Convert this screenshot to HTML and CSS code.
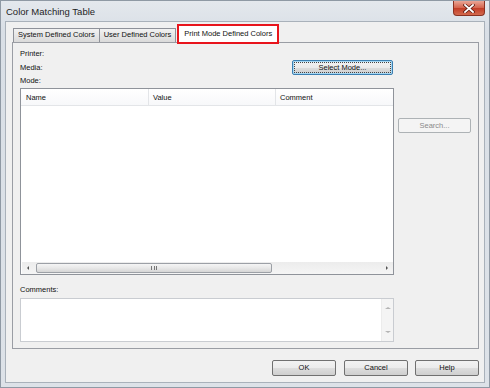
FILE: index.html
```html
<!DOCTYPE html>
<html lang="en">
<head>
  <meta charset="UTF-8" />
  <title>Color Matching Table</title>
  <link rel="stylesheet" href="styles.css">
</head>
<body>
  <div class="window">
    <div class="titlebar">
      <span class="title">Color Matching Table</span>
      <div class="close">
        <svg width="12" height="9" viewBox="0 0 12 9">
          <path d="M2 1 L10 8 M10 1 L2 8" stroke="#5a1a10" stroke-width="3.2" stroke-linecap="square"/>
          <path d="M2 1 L10 8 M10 1 L2 8" stroke="#fff" stroke-width="1.8" stroke-linecap="square"/>
        </svg>
      </div>
    </div>

    <div class="client">
      <div class="tabs">
        <div class="tab">System Defined Colors</div>
        <div class="tab">User Defined Colors</div>
        <div class="tab active">Print Mode Defined Colors</div>
      </div>

      <div class="panel">
        <div class="main">
          <div class="info">
            <div class="labels">
              <div>Printer:</div>
              <div>Media:</div>
              <div>Mode:</div>
            </div>
            <button class="btn default">Select Mode...</button>
          </div>

          <div class="list">
            <div class="list-head">
              <div class="col col-name">Name</div>
              <div class="col col-value">Value</div>
              <div class="col col-comment">Comment</div>
            </div>
            <div class="list-body"></div>
            <div class="hscroll">
              <span class="arrow left"></span>
              <div class="track">
                <div class="thumb"><span class="grip"></span></div>
              </div>
              <span class="arrow right"></span>
            </div>
          </div>

          <div class="field-label">Comments:</div>
          <div class="comments">
            <div class="vscroll">
              <span class="arrow up"></span>
              <span class="arrow down"></span>
            </div>
          </div>
        </div>

        <div class="side">
          <button class="btn disabled">Search...</button>
        </div>
      </div>

      <div class="actions">
        <button class="btn">OK</button>
        <button class="btn">Cancel</button>
        <button class="btn">Help</button>
      </div>
    </div>
  </div>
</body>
</html>
```

FILE: styles.css
```css
* {
  box-sizing: border-box;
}

body {
  margin: 0;
  font-family: 'Liberation Sans', Arial, sans-serif;
  font-size: 7.5px;
  color: #111;
  background: #fff;
}

.window {
  width: 490px;
  height: 388px;
  border: 1px solid #8f99a4;
  background: linear-gradient(#e4e8ed, #d9dfe6 30px, #dde2e8);
  display: flex;
  flex-direction: column;
}

.titlebar {
  height: 20px;
  display: flex;
  align-items: flex-start;
  justify-content: space-between;
  padding-left: 5px;
}

.title {
  font-size: 9.5px;
  color: #1e1e1e;
  margin-top: 5px;
}

.close {
  width: 32px;
  height: 15px;
  margin-right: 4px;
  border: 1px solid #8a3222;
  border-top: none;
  border-radius: 0 0 4px 4px;
  background: linear-gradient(#eaa696, #d4624b 50%, #c23c26 51%, #d36a4e);
  display: flex;
  align-items: center;
  justify-content: center;
}

.client {
  flex: 1;
  margin: 0 4px 4px 4px;
  border: 1px solid #a9b1ba;
  background: #f0f0f0;
  padding: 2px 5px 0 6px;
  display: flex;
  flex-direction: column;
}

/* tabs */
.tabs {
  height: 18px;
  display: flex;
  align-items: flex-end;
  padding-left: 1px;
  position: relative;
  z-index: 1;
}

.tab {
  height: 14px;
  line-height: 12px;
  padding: 0 4px;
  border: 1px solid #8e9199;
  border-bottom: none;
  margin-right: -1px;
  background: linear-gradient(#f2f2f2, #e6e6e6 50%, #dadada);
  white-space: nowrap;
}

.tab.active {
  height: 20px;
  line-height: 15px;
  margin: 0 0 -2px 2px;
  padding: 0 5px;
  border: 2px solid #e8141c;
  background: #fff;
}

/* panel */
.panel {
  height: 307px;
  border: 1px solid #9a9da4;
  background: #f0f0f0;
  padding: 4px 0 0 7px;
  display: flex;
}

.main {
  width: 374px;
  display: flex;
  flex-direction: column;
}

.info {
  display: flex;
  justify-content: space-between;
}

.labels div {
  height: 13.5px;
  line-height: 13.5px;
}

.side {
  padding: 71px 0 0 4px;
}

/* buttons */
.btn {
  font-family: inherit;
  font-size: 7.5px;
  line-height: 1;
  color: #111;
  width: 64px;
  height: 16px;
  padding: 0;
  border: 1px solid #707070;
  border-radius: 2px;
  background: linear-gradient(#f2f2f2, #ebebeb 50%, #dddddd 51%, #cfcfcf);
}

.btn.default {
  width: 101px;
  height: 15px;
  margin: 13px 1px 0 0;
  border-color: #3c7fb1;
  box-shadow: 0 0 0 1px #a6d8f4 inset;
  outline: 1px dotted #444;
  outline-offset: -3px;
}

.btn.disabled {
  width: 73px;
  height: 15px;
  border-color: #adb2b5;
  background: #f4f4f4;
  color: #8a8a8a;
}

/* list view */
.list {
  margin-top: 0.5px;
  height: 187px;
  border: 1px solid #8f939a;
  background: #fff;
  display: flex;
  flex-direction: column;
}

.list-head {
  height: 17px;
  display: flex;
  border-bottom: 1px solid #e3e5e8;
  background: linear-gradient(#fff, #f7f8fa);
}

.col {
  line-height: 17px;
  padding-left: 5px;
  border-right: 1px solid #e3e5e8;
}

.col-name {
  width: 128px;
}

.col-value {
  width: 127px;
  padding-left: 4px;
}

.col-comment {
  flex: 1;
  border-right: none;
  padding-left: 4px;
}

.list-body {
  flex: 1;
}

.hscroll {
  height: 12px;
  margin: 0 0 0 1px;
  display: flex;
  align-items: center;
  background: linear-gradient(#ececec, #f5f5f5);
}

.arrow {
  width: 12px;
  height: 12px;
  display: flex;
  align-items: center;
  justify-content: center;
}

.arrow::before {
  content: "";
  width: 0;
  height: 0;
}

.arrow.left::before {
  border-top: 2.5px solid transparent;
  border-bottom: 2.5px solid transparent;
  border-right: 2.5px solid #555;
}

.arrow.right::before {
  border-top: 2.5px solid transparent;
  border-bottom: 2.5px solid transparent;
  border-left: 2.5px solid #555;
}

.arrow.up::before {
  border-left: 3px solid transparent;
  border-right: 3px solid transparent;
  border-bottom: 2.5px solid #b4b4b4;
}

.arrow.down::before {
  border-left: 3px solid transparent;
  border-right: 3px solid transparent;
  border-top: 2.5px solid #b4b4b4;
}

.track {
  flex: 1;
  height: 12px;
  padding: 1px 0;
}

.thumb {
  width: 236px;
  height: 10px;
  margin-left: 2px;
  border: 1px solid #9ca0a6;
  border-radius: 2px;
  background: linear-gradient(#f5f5f5, #e8e8e8 50%, #d6d6d6);
  display: flex;
  align-items: center;
  justify-content: center;
}

.grip {
  width: 6px;
  height: 4px;
  border-left: 1px solid #777;
  border-right: 1px solid #777;
  background: linear-gradient(90deg, transparent 2px, #777 2px, #777 3px, transparent 3px);
}

/* comments */
.field-label {
  margin-top: 8px;
  height: 13.5px;
  line-height: 13.5px;
}

.comments {
  margin-top: 1px;
  height: 44px;
  border: 1px solid #c9ccd1;
  background: #fff;
  display: flex;
  justify-content: flex-end;
}

.vscroll {
  width: 12px;
  background: #f4f4f4;
  border-left: 1px solid #ececec;
  display: flex;
  flex-direction: column;
  justify-content: space-between;
  padding: 3px 0;
}

/* dialog buttons */
.actions {
  display: flex;
  justify-content: flex-end;
  gap: 7px;
  margin-top: 11px;
}

.actions .btn:nth-child(1) {
  margin-right: 1px;
}
```
